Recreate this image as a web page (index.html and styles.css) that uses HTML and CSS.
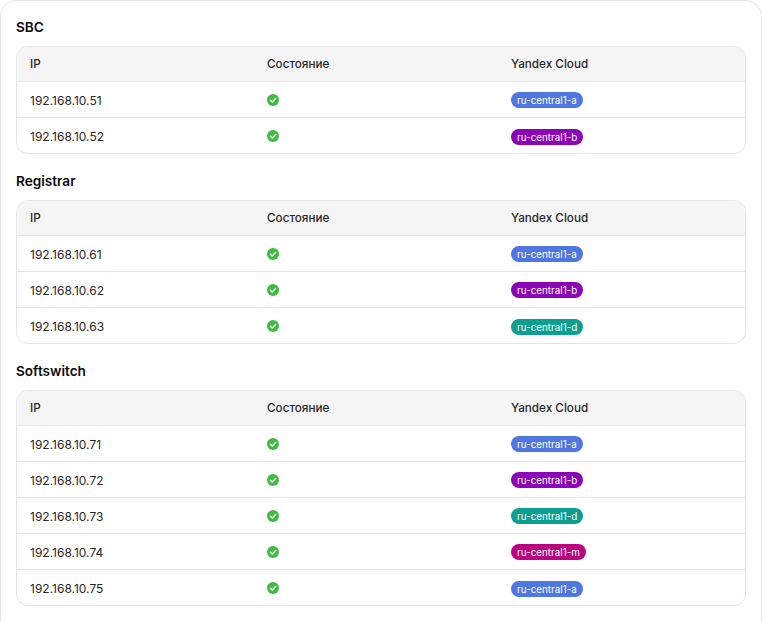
FILE: index.html
```html
<!DOCTYPE html>
<html lang="en">
<head>
    <meta charset="UTF-8">
    <meta name="viewport" content="width=device-width, initial-scale=1.0">
    <title>Ноды</title>
    <link rel="stylesheet" href="styles.css">
</head>
<body>
    <svg class="defs" width="0" height="0">
        <symbol id="ok" viewBox="0 0 12 12">
            <circle cx="6" cy="6" r="6" fill="#3fbb41"/>
            <path d="M3.4 6.2l1.8 1.8 3.4-3.6" fill="none" stroke="#fff" stroke-width="1.4" stroke-linecap="round" stroke-linejoin="round"/>
        </symbol>
    </svg>
    <div class="card">
        <h3 class="title">SBC</h3>
        <div class="table-wrap">
            <table>
                <thead><tr><th class="col-ip">IP</th><th class="col-state">Состояние</th><th>Yandex Cloud</th></tr></thead>
                <tbody>
                    <tr><td>192.168.10.51</td><td><svg class="ok"><use href="#ok"/></svg></td><td><span class="zone zone-a">ru-central1-a</span></td></tr>
                    <tr><td>192.168.10.52</td><td><svg class="ok"><use href="#ok"/></svg></td><td><span class="zone zone-b">ru-central1-b</span></td></tr>
                </tbody>
            </table>
        </div>
        <h3 class="title">Registrar</h3>
        <div class="table-wrap">
            <table>
                <thead><tr><th class="col-ip">IP</th><th class="col-state">Состояние</th><th>Yandex Cloud</th></tr></thead>
                <tbody>
                    <tr><td>192.168.10.61</td><td><svg class="ok"><use href="#ok"/></svg></td><td><span class="zone zone-a">ru-central1-a</span></td></tr>
                    <tr><td>192.168.10.62</td><td><svg class="ok"><use href="#ok"/></svg></td><td><span class="zone zone-b">ru-central1-b</span></td></tr>
                    <tr><td>192.168.10.63</td><td><svg class="ok"><use href="#ok"/></svg></td><td><span class="zone zone-d">ru-central1-d</span></td></tr>
                </tbody>
            </table>
        </div>
        <h3 class="title">Softswitch</h3>
        <div class="table-wrap">
            <table>
                <thead><tr><th class="col-ip">IP</th><th class="col-state">Состояние</th><th>Yandex Cloud</th></tr></thead>
                <tbody>
                    <tr><td>192.168.10.71</td><td><svg class="ok"><use href="#ok"/></svg></td><td><span class="zone zone-a">ru-central1-a</span></td></tr>
                    <tr><td>192.168.10.72</td><td><svg class="ok"><use href="#ok"/></svg></td><td><span class="zone zone-b">ru-central1-b</span></td></tr>
                    <tr><td>192.168.10.73</td><td><svg class="ok"><use href="#ok"/></svg></td><td><span class="zone zone-d">ru-central1-d</span></td></tr>
                    <tr><td>192.168.10.74</td><td><svg class="ok"><use href="#ok"/></svg></td><td><span class="zone zone-m">ru-central1-m</span></td></tr>
                    <tr><td>192.168.10.75</td><td><svg class="ok"><use href="#ok"/></svg></td><td><span class="zone zone-a">ru-central1-a</span></td></tr>
                </tbody>
            </table>
        </div>
    </div>
</body>
</html>
```

FILE: styles.css
```css
* {
    box-sizing: border-box;
}

body {
    margin: 0;
    background: #fff;
    color: #262626;
    font-family: Inter, "Liberation Sans", sans-serif;
    font-size: 11.7px;
}

.defs {
    display: block;
}

.card {
    width: 762px;
    height: 640px;
    padding: 17px 15px 0;
    border: 1px solid #e5e5e5;
    border-radius: 16px;
}

.title {
    margin: 0 0 9px;
    height: 19px;
    color: #0a0a0a;
    font-size: 13.6px;
    font-weight: 600;
    line-height: 19px;
}

.table-wrap {
    margin-bottom: 18px;
    border: 1px solid #e5e5e5;
    border-radius: 12px;
    overflow: hidden;
}

table {
    width: 100%;
    border-collapse: collapse;
    table-layout: fixed;
}

th {
    height: 34px;
    padding: 0 13px;
    background: #f5f5f5;
    font-weight: 500;
    text-align: left;
}

td {
    height: 36px;
    padding: 2px 13px 0;
    border-top: 1px solid #e5e5e5;
    font-size: 12px;
}

.col-ip {
    width: 237px;
}

.col-state {
    width: 244px;
}

.ok {
    display: block;
    width: 12px;
    height: 12px;
}

.zone {
    display: inline-block;
    height: 16px;
    padding: 0 6px;
    border-radius: 8px;
    color: #fff;
    font-size: 9.85px;
    line-height: 16px;
    vertical-align: middle;
}

.zone-a {
    background: #4f77e1;
}

.zone-b {
    background: #8a05b5;
}

.zone-d {
    background: #0c9f8f;
}

.zone-m {
    background: #b8047f;
}
```
